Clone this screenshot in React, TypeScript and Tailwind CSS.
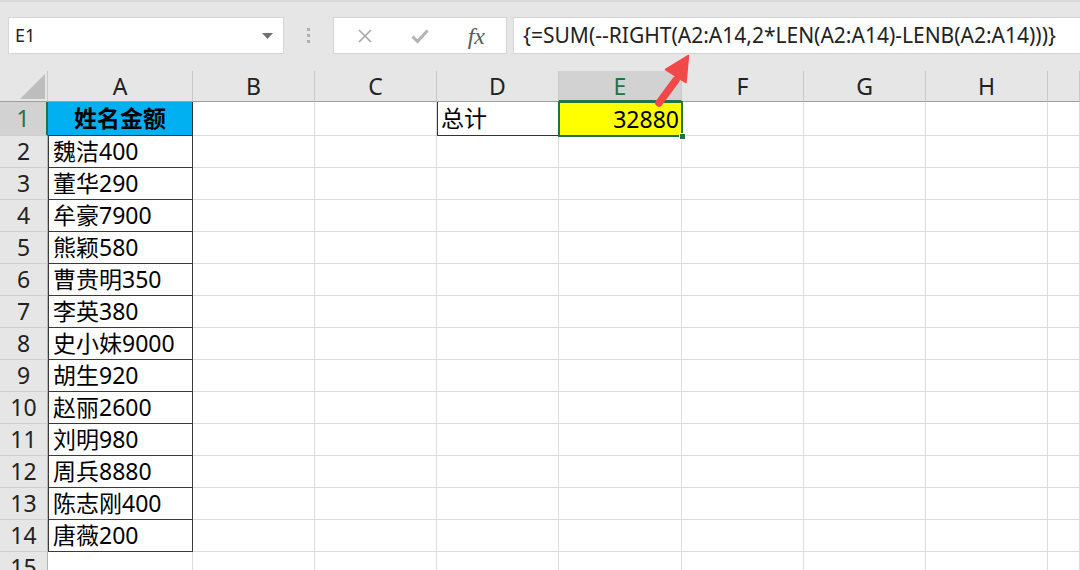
import React from 'react';

const COLS = ['A', 'B', 'C', 'D', 'E', 'F', 'G', 'H', 'I'];

const NAMES = [
  '魏洁400',
  '董华290',
  '牟豪7900',
  '熊颖580',
  '曹贵明350',
  '李英380',
  '史小妹9000',
  '胡生920',
  '赵丽2600',
  '刘明980',
  '周兵8880',
  '陈志刚400',
  '唐薇200',
];

const FONT = "font-['Noto_Sans','Noto_Sans_CJK_SC',sans-serif]";

/** Top strip: name box, the three formula buttons and the formula text. */
function FormulaBar() {
  return (
    <div className="flex h-[71px] items-start border-t-2 border-[#d8d8d8] bg-[#e6e6e6] pl-[8px] pt-[15px]">
      <div className="flex h-[37px] w-[276px] items-center justify-between border border-[#d6d6d6] bg-white pl-[6px] pr-[10px]">
        <span className="text-[18px] text-[#222]">E1</span>
        <svg width="11" height="6" viewBox="0 0 11 6" aria-hidden>
          <path d="M0 0h11L5.5 6z" fill="#707070" />
        </svg>
      </div>
      <div className="flex h-[37px] w-[49px] flex-col items-center justify-center gap-[3px]">
        <span className="h-[3px] w-[3px] bg-[#b1b1b1]" />
        <span className="h-[3px] w-[3px] bg-[#b1b1b1]" />
        <span className="h-[3px] w-[3px] bg-[#b1b1b1]" />
      </div>
      <div className="flex h-[37px] w-[174px] items-center border border-[#d6d6d6] bg-white">
        <div className="flex w-[60px] justify-center pl-[2px]">
          <svg width="16" height="16" viewBox="0 0 16 16" aria-hidden>
            <path d="M2 2l12 12M14 2L2 14" stroke="#a8a8a8" strokeWidth="1.6" />
          </svg>
        </div>
        <div className="flex w-[54px] justify-center">
          <svg width="18" height="16" viewBox="0 0 18 16" aria-hidden>
            <path d="M1.5 8.5l5 5L16.5 2.5" stroke="#b4b4b4" strokeWidth="3" fill="none" />
          </svg>
        </div>
        <div className="flex w-[60px] justify-center">
          <span className="font-['Liberation_Serif',serif] text-[24px] italic leading-none text-[#5a5a5a]">
            fx
          </span>
        </div>
      </div>
      <div className="ml-[6px] flex h-[37px] flex-1 items-center border-y border-l border-[#d6d6d6] bg-white pl-[9px]">
        <span className="text-[21px] text-[#222] whitespace-nowrap">
          {'{=SUM(--RIGHT(A2:A14,2*LEN(A2:A14)-LENB(A2:A14)))}'}
        </span>
      </div>
    </div>
  );
}

function ColumnHeaders() {
  return (
    <>
      <div className="flex items-end justify-end border-r border-b border-r-[#c9c9c9] border-b-[#9e9e9e] bg-[#e6e6e6] pr-[2px] pb-[2px]">
        <svg width="25" height="25" viewBox="0 0 25 25" aria-hidden>
          <path d="M25 0v25H0z" fill="#bdbdbd" />
        </svg>
      </div>
      {COLS.map((c) =>
        c === 'E' ? (
          <div
            key={c}
            className="flex items-center justify-center border-r border-b-2 border-r-[#c9c9c9] border-b-[#217346] bg-[#d2d2d2] pt-[1px] text-[23px] text-[#217346]"
          >
            {c}
          </div>
        ) : (
          <div
            key={c}
            className="flex items-center justify-center border-r border-b border-r-[#c9c9c9] border-b-[#9e9e9e] bg-[#e6e6e6] pt-[1px] text-[23px] text-[#222]"
          >
            {c === 'I' ? '' : c}
          </div>
        )
      )}
    </>
  );
}

function RowHeader({ n }: { n: number }) {
  if (n === 1) {
    return (
      <div className="flex items-center justify-center border-r-2 border-b border-r-[#217346] border-b-[#cfcfcf] bg-[#d2d2d2] text-[23px] text-[#217346]">
        1
      </div>
    );
  }
  return (
    <div className="flex items-center justify-center border-r border-b border-r-[#b5b5b5] border-b-[#cfcfcf] bg-[#e6e6e6] text-[23px] text-[#222]">
      {n}
    </div>
  );
}

function Blank() {
  return <div className="border-r border-b border-[#dcdcdc]" />;
}

function Row({ n }: { n: number }) {
  const name = n >= 2 && n <= 14 ? NAMES[n - 2] : null;
  return (
    <>
      <RowHeader n={n} />
      {n === 1 ? (
        <div className="flex items-center justify-center border-r border-b border-[#333] bg-[#00b0f0] text-[23px] font-bold text-black">
          姓名金额
        </div>
      ) : name ? (
        <div className="flex items-center border-r border-b border-l border-[#3a3a3a] pl-[4px] text-[23px] text-black">
          {name}
        </div>
      ) : (
        <Blank />
      )}
      <Blank />
      <Blank />
      {n === 1 ? (
        <div className="flex items-center border-l border-b border-[#333] pl-[3px] text-[23px] text-black">
          总计
        </div>
      ) : (
        <Blank />
      )}
      {n === 1 ? (
        <div className="relative flex items-center justify-end bg-[#ffff00] pr-[3px] text-[23px] text-black">
          32880
          <div className="pointer-events-none absolute -inset-[1px] border-2 border-[#217346]" />
          <div className="absolute -right-[4px] -bottom-[4px] h-[7px] w-[7px] border border-white bg-[#217346]" />
        </div>
      ) : (
        <Blank />
      )}
      <Blank />
      <Blank />
      <Blank />
      <Blank />
    </>
  );
}

function Arrow() {
  return (
    <svg
      className="pointer-events-none absolute top-0 left-0"
      width="1080"
      height="570"
      viewBox="0 0 1080 570"
      aria-hidden
    >
      <path d="M659 103L676 80" stroke="#f2484a" strokeWidth="7.5" strokeLinecap="round" />
      <path d="M688.5 55.5L665.5 69.5L686 82.5Z" fill="#f2484a" stroke="#f2484a" strokeWidth="1.5" strokeLinejoin="round" />
    </svg>
  );
}

export default function App() {
  return (
    <div className={`relative h-[570px] w-[1080px] overflow-hidden bg-white ${FONT}`}>
      <FormulaBar />
      <div className="grid grid-cols-[48px_145px_122px_122px_122px_123px_122px_122px_122px_32px] grid-rows-[31px_34px_repeat(14,32px)]">
        <ColumnHeaders />
        {Array.from({ length: 15 }, (_, i) => (
          <Row key={i + 1} n={i + 1} />
        ))}
      </div>
      <Arrow />
    </div>
  );
}
